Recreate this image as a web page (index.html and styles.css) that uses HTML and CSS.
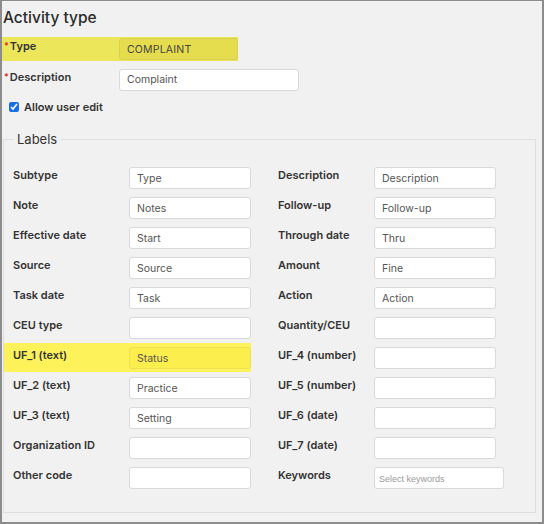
FILE: index.html
```html
<!DOCTYPE html>
<html lang="en">
<head>
<meta charset="utf-8">
<title>Activity type</title>
<link rel="stylesheet" href="styles.css">
</head>
<body>
<div class="frame">
  <h1 class="title">Activity type</h1>

  <div class="top-row hl-dim">
    <label class="top-label"><span class="req">*</span>Type</label>
    <input class="inp inp-type" type="text" value="COMPLAINT">
  </div>

  <div class="top-row desc-row">
    <label class="top-label"><span class="req">*</span>Description</label>
    <input class="inp inp-desc" type="text" value="Complaint">
  </div>

  <div class="check-row">
    <input class="chk" type="checkbox" checked>
    <span class="check-label">Allow user edit</span>
  </div>

  <fieldset class="labels">
    <legend class="legend">Labels</legend>
    <div class="grid">
      <div class="field left"><span class="lbl">Subtype</span><input class="inp" type="text" value="Type"></div>
      <div class="field right"><span class="lbl">Description</span><input class="inp" type="text" value="Description"></div>

      <div class="field left"><span class="lbl">Note</span><input class="inp" type="text" value="Notes"></div>
      <div class="field right"><span class="lbl">Follow-up</span><input class="inp" type="text" value="Follow-up"></div>

      <div class="field left"><span class="lbl">Effective date</span><input class="inp" type="text" value="Start"></div>
      <div class="field right"><span class="lbl">Through date</span><input class="inp" type="text" value="Thru"></div>

      <div class="field left"><span class="lbl">Source</span><input class="inp" type="text" value="Source"></div>
      <div class="field right"><span class="lbl">Amount</span><input class="inp" type="text" value="Fine"></div>

      <div class="field left"><span class="lbl">Task date</span><input class="inp" type="text" value="Task"></div>
      <div class="field right"><span class="lbl">Action</span><input class="inp" type="text" value="Action"></div>

      <div class="field left"><span class="lbl">CEU type</span><input class="inp" type="text" value=""></div>
      <div class="field right"><span class="lbl">Quantity/CEU</span><input class="inp" type="text" value=""></div>

      <div class="field left hl-bright"><span class="lbl">UF_1 (text)</span><input class="inp inp-bright" type="text" value="Status"></div>
      <div class="field right"><span class="lbl">UF_4 (number)</span><input class="inp" type="text" value=""></div>

      <div class="field left"><span class="lbl">UF_2 (text)</span><input class="inp" type="text" value="Practice"></div>
      <div class="field right"><span class="lbl">UF_5 (number)</span><input class="inp" type="text" value=""></div>

      <div class="field left"><span class="lbl">UF_3 (text)</span><input class="inp" type="text" value="Setting"></div>
      <div class="field right"><span class="lbl">UF_6 (date)</span><input class="inp" type="text" value=""></div>

      <div class="field left"><span class="lbl">Organization ID</span><input class="inp" type="text" value=""></div>
      <div class="field right"><span class="lbl">UF_7 (date)</span><input class="inp" type="text" value=""></div>

      <div class="field left"><span class="lbl">Other code</span><input class="inp" type="text" value=""></div>
      <div class="field right kw"><span class="lbl">Keywords</span><input class="inp inp-kw" type="text" placeholder="Select keywords"></div>
    </div>
  </fieldset>
</div>
</body>
</html>
```
FILE: styles.css
```css
* { box-sizing: border-box; }

html, body {
  margin: 0;
  padding: 0;
  background: #f1f1f1;
}

body {
  font-family: "Inter", "Noto Sans", sans-serif;
  color: #333;
}

.frame {
  width: 544px;
  height: 524px;
  border-top: 1px solid #8c8c8c;
  border-left: 2px solid #8c8c8c;
  border-right: 2px solid #8c8c8c;
  border-bottom: 2px solid #8c8c8c;
  background: #f1f1f1;
  overflow: hidden;
}

.title {
  margin: 0;
  height: 36px;
  padding: 5px 0 0 1px;
  font-size: 15.5px;
  line-height: 24px;
  font-weight: 500;
  color: #2b2b2b;
}

.top-row {
  display: flex;
  align-items: center;
  height: 24px;
}

.hl-dim {
  width: 236px;
  background: #ece65a;
}

.desc-row {
  margin-top: 7px;
  height: 23px;
}

.top-label {
  width: 117px;
  padding-left: 2px;
  font-size: 11px;
  font-weight: 600;
  color: #333;
  align-self: flex-start;
  padding-top: 2px;
  line-height: 14px;
}

.req {
  color: #e0262a;
  font-size: 9px;
  margin-right: 1px;
  vertical-align: 1px;
}

.inp {
  height: 22px;
  border: 1px solid #d9d9d9;
  border-radius: 3px;
  background: #fff;
  padding: 0 0 0 7px;
  font-family: inherit;
  font-size: 10.5px;
  color: #555;
  outline: none;
}

.inp-type {
  width: 119px;
  background: #e6dd4e;
  border-color: #d9d154;
  color: #444;
  letter-spacing: 0.2px;
}

.inp-desc {
  width: 180px;
}

.check-row {
  display: flex;
  align-items: center;
  margin-top: 8px;
  height: 16px;
  padding-left: 7px;
}

.chk {
  width: 10px;
  height: 10px;
  margin: 0 5px 0 0;
  accent-color: #1a6fe0;
}

.check-label {
  font-size: 11px;
  font-weight: 600;
  color: #333;
}

.labels {
  margin: 16px 0 0 1px;
  width: 533px;
  height: 382px;
  border: 1px solid #dedede;
  padding: 20px 0 0 9px;
}

.legend {
  margin-left: 0;
  padding: 0 4px;
  font-size: 13px;
  line-height: 16px;
  color: #333;
}

.grid {
  display: grid;
  grid-template-columns: 238px 218px;
  column-gap: 27px;
  row-gap: 8px;
}

.field {
  display: grid;
  align-items: start;
  height: 22px;
}

.field.left { grid-template-columns: 116px 122px; }
.field.right { grid-template-columns: 96px 122px; }
.field.kw { grid-template-columns: 96px 130px; }

.lbl {
  font-size: 11px;
  font-weight: 600;
  color: #333;
  line-height: 14px;
  padding-top: 1px;
  white-space: nowrap;
}

.field .inp { width: 100%; }

.hl-bright {
  margin: -4px 0 -3px -9px;
  padding: 4px 0 3px 9px;
  height: 29px;
  background: #fdf259;
}

.inp-bright {
  background: #fcee4c;
  border-color: #ece154;
}

.inp-kw::placeholder {
  font-family: "Liberation Sans", Arial, sans-serif;
  font-size: 9px;
  color: #9a9a9a;
}

.inp-kw { padding-left: 4px; }
```
